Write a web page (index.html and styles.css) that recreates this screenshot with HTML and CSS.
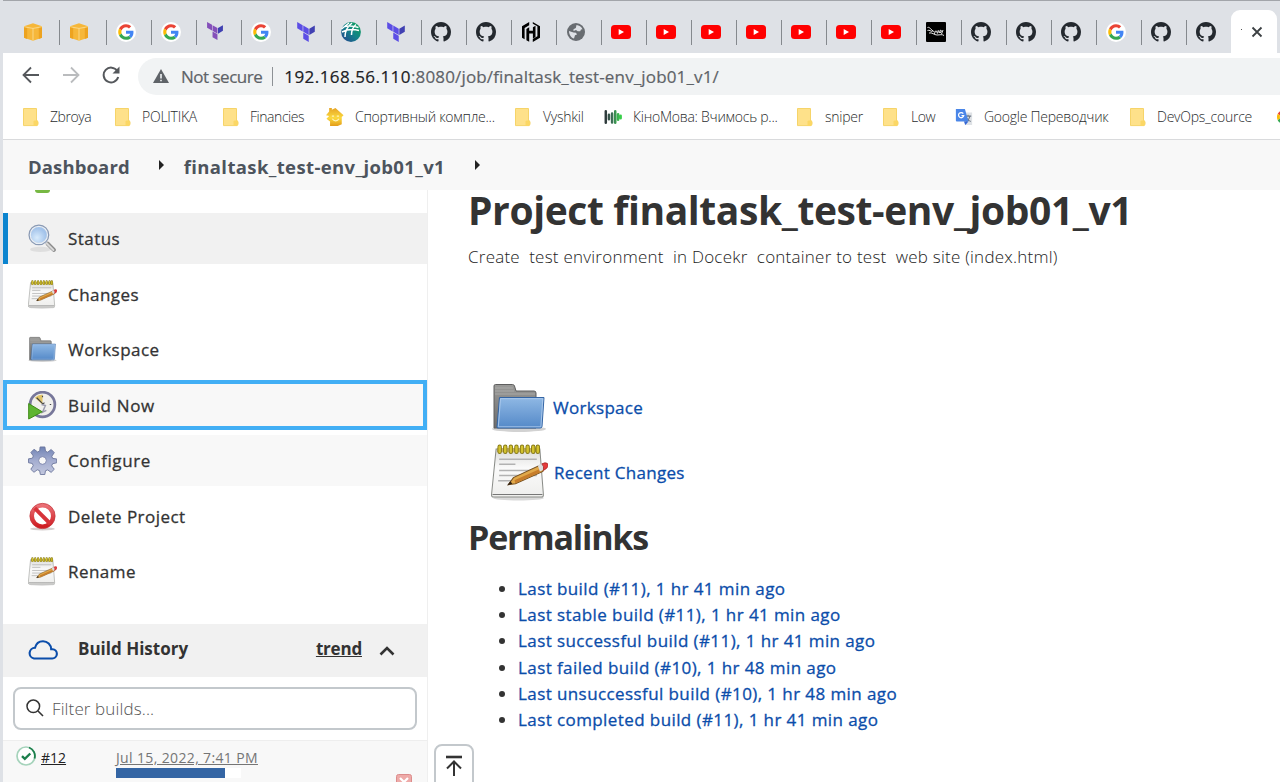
FILE: index.html
```html
<!DOCTYPE html>
<html lang="en">
<head>
<meta charset="utf-8">
<title>finaltask_test-env_job01_v1 [Jenkins]</title>
<link rel="stylesheet" href="styles.css">
</head>
<body>
<svg class="defs" width="0" height="0" aria-hidden="true">
  <defs>
    <linearGradient id="gold" x1="0" y1="0" x2="0" y2="1"><stop offset="0" stop-color="#e6a526"/><stop offset=".55" stop-color="#fbd93f"/><stop offset="1" stop-color="#e39c18"/></linearGradient>
    <linearGradient id="blueFolder" x1="0" y1="0" x2="0" y2="1"><stop offset="0" stop-color="#8fb8e4"/><stop offset="1" stop-color="#5489c8"/></linearGradient>
    <linearGradient id="greyFolder" x1="0" y1="0" x2="0" y2="1"><stop offset="0" stop-color="#9a9a98"/><stop offset="1" stop-color="#6c6c6c"/></linearGradient>
    <linearGradient id="paper" x1="0" y1="0" x2="0" y2="1"><stop offset="0" stop-color="#dcdcda"/><stop offset=".4" stop-color="#fafafa"/><stop offset="1" stop-color="#eeeeec"/></linearGradient>
    <linearGradient id="gear" x1="0" y1="0" x2="0" y2="1"><stop offset="0" stop-color="#7083b4"/><stop offset=".5" stop-color="#a4add0"/><stop offset="1" stop-color="#c3c8de"/></linearGradient>
    <linearGradient id="stop" x1="0" y1="0" x2="0" y2="1"><stop offset="0" stop-color="#ea7076"/><stop offset="1" stop-color="#cf1d22"/></linearGradient>
    <radialGradient id="lens" cx=".4" cy=".65"><stop offset="0" stop-color="#d8ebfc"/><stop offset="1" stop-color="#a3c3ea"/></radialGradient>
    <linearGradient id="earth" x1="0" y1="1" x2="1" y2="0"><stop offset="0" stop-color="#27408f"/><stop offset=".5" stop-color="#12828a"/><stop offset="1" stop-color="#0ca650"/></linearGradient>
    <linearGradient id="wave" x1="0" y1="0" x2="1" y2="0"><stop offset="0" stop-color="#2f3a3c"/><stop offset=".4" stop-color="#3c6b55"/><stop offset="1" stop-color="#38d04a"/></linearGradient>
  </defs>
  <symbol id="aws" viewBox="0 0 20 20"><path fill="#f6b73a" d="M1 4.200 10 1.300l9 2.900v11.600l-9 2.900-9-2.900z"/><path fill="none" stroke="#fbdf9c" stroke-width=".8" d="M1 4.800 10 6.400l9-1.600M10 6.400v12"/><path fill="#eda320" d="m1 5.200 3.200.7v11l-3.200-1.100zM15.800 5.900l3.200-.7v10.600l-3.200 1.100z"/></symbol>
  <symbol id="google" viewBox="0 0 20 20"><circle cx="10" cy="10" r="10" fill="#fff"/><g transform="translate(2.200 2.200) scale(.325)"><path fill="#ea4335" d="M24 9.500c3.540 0 6.710 1.220 9.210 3.600l6.850-6.850C35.900 2.380 30.470 0 24 0 14.620 0 6.510 5.380 2.560 13.220l7.980 6.190C12.430 13.720 17.740 9.500 24 9.500z"/><path fill="#4285f4" d="M46.980 24.550c0-1.570-.15-3.090-.38-4.550H24v9.020h12.940c-.58 2.960-2.260 5.480-4.780 7.180l7.730 6c4.510-4.180 7.090-10.360 7.090-17.650z"/><path fill="#fbbc05" d="M10.530 28.590A14.500 14.500 0 0 1 9.770 24c0-1.600.27-3.140.76-4.590l-7.980-6.190A23.900 23.900 0 0 0 0 24c0 3.880.92 7.540 2.560 10.780z"/><path fill="#34a853" d="M24 48c6.480 0 11.930-2.130 15.890-5.810l-7.730-6c-2.150 1.450-4.920 2.300-8.160 2.300-6.260 0-11.570-4.220-13.470-9.910l-7.980 6.190C6.510 42.620 14.620 48 24 48z"/></g></symbol>
  <symbol id="terraform" viewBox="0 0 24 24"><path d="M1.440 0v7.575l6.561 3.790V3.787zM8.720 4.230v7.575l6.561 3.787V8.018zm0 8.405v7.575L15.280 24v-7.578z"/><path class="tf-side" d="m22.560 4.227-6.561 3.791v7.574l6.560-3.787z"/></symbol>
  <symbol id="planet" viewBox="0 0 20 20"><circle cx="10" cy="10" r="9.900" fill="url(#earth)"/><path fill="none" stroke="#fff" stroke-width="1.500" d="M1 10c5-2.500 11-3 17-1.500M3.500 4.500C9 3.500 13 4 17.500 5.500M4 15C4 9 7 4 11 1M10.500 13C10.500 8 12.500 4.500 15 2.500M.500 7 8 1"/></symbol>
  <symbol id="github" viewBox="0 0 16 16"><path fill="#24292f" d="M8 0C3.580 0 0 3.580 0 8c0 3.540 2.290 6.530 5.470 7.590.4.070.55-.17.55-.38 0-.19-.01-.82-.01-1.490-2.010.37-2.530-.49-2.690-.94-.09-.23-.48-.94-.82-1.130-.28-.15-.68-.52-.01-.53.63-.01 1.080.58 1.230.82.72 1.210 1.870.87 2.330.66.070-.52.280-.87.510-1.070-1.780-.2-3.640-.89-3.640-3.950 0-.87.310-1.590.820-2.150-.08-.2-.36-1.020.080-2.120 0 0 .67-.21 2.200.820.640-.18 1.320-.27 2-.27s1.360.090 2 .270c1.530-1.040 2.200-.820 2.200-.820.440 1.100.160 1.920.080 2.120.510.560.820 1.270.820 2.150 0 3.070-1.870 3.750-3.650 3.950.290.250.540.730.540 1.480 0 1.070-.010 1.930-.010 2.200 0 .210.150.460.550.380A8.010 8.010 0 0 0 16 8c0-4.420-3.580-8-8-8z"/></symbol>
  <symbol id="hashi" viewBox="0 0 20 20"><path d="M8.200 0v3.200L3.600 5.900v11.300L1 15.700V4.200zM5.400 7 8.200 5.300v3.500h3.700V5.200l2.600-1.500v11.200L11.900 16.500v-4.900H8.200v8.200l-2.800-1.600zM11.800 0l7.200 4.200v11.500L11.800 20v-3l4.600-2.800V4.300l-4.600-2.600z"/></symbol>
  <symbol id="globe" viewBox="0 0 20 20"><circle cx="10" cy="10" r="9" fill="#686c71"/><path fill="#dee1e6" d="M10.500 3c2.500.2 5 1.700 6 4.200l-1.500.3-.8 1.800h-2.500L10 8l-2.500 1V7.300L9.800 6zM3 9l4.500 1.500 2.500.2 1 1.800-2 .8-1 3.200C5.500 16 3 13 3 9z"/></symbol>
  <symbol id="youtube" viewBox="0 0 20 20"><rect y="3" width="20" height="14" rx="3.500" fill="#f00"/><path fill="#fff" d="m7.700 7 5.300 3-5.300 3z"/></symbol>
  <symbol id="signature" viewBox="0 0 20 20"><rect width="20" height="20" rx="1" fill="#000"/><path fill="none" stroke="#fff" stroke-width=".9" d="M1.500 5.500c2-1 3 2 7 4.500M1.500 8.500c2-1 3 1 5 1M8 12c2-1 0-3 2-3s0 3 2 2V8.500c1 0 1 2 2 2.500V8.500c2-1 2 2 0 2M17 8l-1.500 4M3 11c3-1 5 2 8 2s5-1 7 .5"/></symbol>
  <symbol id="bfolder" viewBox="0 0 18 20"><path fill="#fee18a" stroke="#f6d469" d="M1.500 1.500h13v12.500l1.500.6v3l-1.500 1h-13z"/><path fill="#fbd765" d="M11.500 19v-4.500l1-1H16v4.500l-1 1z"/></symbol>
  <symbol id="house" viewBox="0 0 20 20"><path fill="url(#gold)" d="M3.500 0h3v2L10.500 0l9 8-2 2v8L13 20H4.500v-5L.5 12l3-3L0 8l3.500-4z"/><path fill="none" stroke="#fff3b8" stroke-width="1.300" d="M6.500 9H9M12 9h2.500M7 12c2 3 5 3 7.500 0"/></symbol>
  <symbol id="equalizer" viewBox="0 0 20 20"><path fill="none" stroke="url(#wave)" stroke-width="2.800" stroke-linecap="round" d="M2 3.500v13M5.500 7.500v5M9 6v10M12.500 3.500v13M15.700 7v6M18.500 8.500v3"/></symbol>
  <symbol id="translate" viewBox="0 0 20 20"><path fill="#dfe2e6" d="M8 5h11v14h-8z"/><path fill="none" stroke="#6e7a88" stroke-width="1.200" d="M11 9h7M14.500 7.500V9M12 15c3-1 4-3.500 4.500-6M12.500 10.500c1 2 2.500 3.500 5 4.500"/><path fill="#4a86e8" d="M1 1h10l4 14H2a1 1 0 0 1-1-1z"/><path fill="#3367d6" d="m10 15 1.500 4 3.500-4z"/><path fill="none" stroke="#fff" stroke-width="1.400" d="M9.200 6.200A2.900 2.900 0 1 0 9.700 8.500H7.200"/></symbol>
  <symbol id="notepad" viewBox="0 0 56 56"><ellipse cx="27" cy="53" rx="25" ry="2.500" fill="#d9d9d9"/><path fill="url(#paper)" stroke="#8b8d89" d="M5 5h43l3.500 45q0 2-2 2h-47q-2 0-2-2z"/><path fill="none" stroke="#777" d="M1.500 49.500h49"/><path stroke="#b2b2b2" stroke-width="1.500" d="M8 15h37M8 20h16M8 26h37M8 31h37M7 36h13"/><path fill="#c9b56a" d="M6 4h42v4H6z"/><path stroke="#857818" stroke-width="4.300" stroke-linecap="round" d="M8.500 2.700v5M14 2.700v5M19.500 2.700v5M25 2.700v5M30.500 2.700v5M36 2.700v5M41.500 2.700v5M46 2.700v5"/><path stroke="#d3c22e" stroke-width="2.500" stroke-linecap="round" d="M8.500 2.700v5M14 2.700v5M19.500 2.700v5M25 2.700v5M30.500 2.700v5M36 2.700v5M41.500 2.700v5M46 2.700v5"/><path fill="#e1a94a" stroke="#76501e" d="m17 40 5-7 26-12q4 1 3 6L24 39z"/><path fill="#c77d2a" d="m24 38.500 25-11-1-3-25 11z"/><path fill="#ddd" d="m46 21 4-1.500q3 2 2 5.500l-4 2z"/><path fill="#e63b3b" stroke="#a22" stroke-width=".8" d="m50 19.500 3-1q3 0 3 2t-1.500 3.500L51.500 26q1-4-1.500-6.500z"/><path fill="#302010" d="m16 40.500 3-4 2 2.500z"/></symbol>
  <symbol id="folder" viewBox="0 0 56 50"><ellipse cx="28" cy="46" rx="27" ry="3" fill="#d2d2d2"/><path fill="url(#greyFolder)" stroke="#5e5e5e" d="M3 45V3q0-1.500 1.500-1.500h17Q23 1.500 23.500 3L25 8h18q2 0 2 2v35z"/><path stroke="#b5b5b3" stroke-width=".7" d="M4 5h18M4 8h19M4 11h40"/><path fill="url(#blueFolder)" stroke="#3465a4" d="M8.500 14.500h44.500L51 43.500q0 1.500-2 1.500H7q-1.500 0-1-1.500z"/><path fill="none" stroke="#aecbec" stroke-width=".9" d="M9.500 15.700h42.300l-1.900 28.100H7.300z"/></symbol>
  <symbol id="magnifier" viewBox="0 0 28 28"><ellipse cx="12" cy="24.500" rx="10" ry="2.500" fill="#dedede"/><path stroke="#8b8b8b" stroke-width="4" stroke-linecap="round" d="m19 19 6 6"/><path stroke="#d8d8d8" stroke-width="2" stroke-linecap="round" d="m18 18.500 6.500 6.500"/><circle cx="10.500" cy="10.500" r="9" fill="url(#lens)" stroke="#8a9ab4" stroke-width="2.200"/><circle cx="10.500" cy="10.500" r="8.300" fill="none" stroke="#e9eff6" stroke-width="1.200"/></symbol>
  <symbol id="clock" viewBox="0 0 30 30"><circle cx="15" cy="14" r="12.800" fill="#f0efec" stroke="#77779a" stroke-width="2.800"/><path fill="#e1c467" d="m15 14-8-7q3-3 8-3.500z"/><path fill="none" stroke="#444" stroke-width="1.200" d="m9 7 6.500 6.500L17 12M15 5v1.500M24 14h-1.500"/><path fill="none" stroke="#9a9aae" stroke-width="1.500" d="M14 14l4 1-3 7 4-2"/><path fill="#5db531" stroke="#3b8813" d="m.7 13 14 8.500-14 7.500z"/></symbol>
  <symbol id="gearicon" viewBox="0 0 30 30"><path fill="url(#gear)" stroke="#69739b" stroke-width=".9" d="m12.500 1 5 0 .6 4.400 2.300 1 3.600-2.800 3.200 3.300-2.600 3.700.9 2.200 4.200.6v4l-4.200.9-1 2.200 2.700 3.600-3.300 3.200-3.500-2.600-2.300.9-.7 3.900h-4.600l-.8-4-2.400-.9-3.400 2.600-3.300-3.100 2.500-3.700-.9-2.300-4-.8v-4l4.100-.7.9-2.300-2.500-3.600 3.200-3.300 3.700 2.700 2.200-.9z"/><circle cx="15" cy="15" r="4" fill="#f8f8f8" stroke="#7c86ad"/></symbol>
  <symbol id="forbidden" viewBox="0 0 28 28"><ellipse cx="14" cy="26" rx="12" ry="1.500" fill="#d5cfcf"/><circle cx="14" cy="13.500" r="10.200" fill="#fff" stroke="url(#stop)" stroke-width="4"/><path stroke="#d7333a" stroke-width="3.800" d="m6.500 6 15 15"/><circle cx="14" cy="13.500" r="12.200" fill="none" stroke="#c3363b" stroke-width=".7"/></symbol>
</svg>

<div class="window">
  <header class="tabs">
    <span class="tab tab-first"><svg><use href="#aws"/></svg></span>
    <span class="tab tab-second"><svg><use href="#aws"/></svg></span>
    <span class="tab"><svg><use href="#google"/></svg></span>
    <span class="tab"><svg><use href="#google"/></svg></span>
    <span class="tab"><svg class="tf-old"><use href="#terraform"/></svg></span>
    <span class="tab"><svg><use href="#google"/></svg></span>
    <span class="tab"><svg class="tf"><use href="#terraform"/></svg></span>
    <span class="tab"><svg><use href="#planet"/></svg></span>
    <span class="tab"><svg class="tf"><use href="#terraform"/></svg></span>
    <span class="tab"><svg><use href="#github"/></svg></span>
    <span class="tab"><svg><use href="#github"/></svg></span>
    <span class="tab"><svg><use href="#hashi"/></svg></span>
    <span class="tab"><svg><use href="#globe"/></svg></span>
    <span class="tab"><svg><use href="#youtube"/></svg></span>
    <span class="tab"><svg><use href="#youtube"/></svg></span>
    <span class="tab"><svg><use href="#youtube"/></svg></span>
    <span class="tab"><svg><use href="#youtube"/></svg></span>
    <span class="tab"><svg><use href="#youtube"/></svg></span>
    <span class="tab"><svg><use href="#youtube"/></svg></span>
    <span class="tab"><svg><use href="#youtube"/></svg></span>
    <span class="tab"><svg><use href="#signature"/></svg></span>
    <span class="tab"><svg><use href="#github"/></svg></span>
    <span class="tab"><svg><use href="#github"/></svg></span>
    <span class="tab"><svg><use href="#github"/></svg></span>
    <span class="tab"><svg><use href="#google"/></svg></span>
    <span class="tab"><svg><use href="#github"/></svg></span>
    <span class="tab tab-last"><svg><use href="#github"/></svg></span>
    <span class="tab-active"><i class="dot"></i><svg viewBox="0 0 12 12"><path d="m1.500 1.500 9 9m0-9-9 9" stroke="#3c4043" stroke-width="1.800"/></svg></span>
  </header>

  <div class="toolbar">
    <svg class="nav" viewBox="0 0 18 18"><path d="M17 9H2M9 1.500 1.500 9 9 16.500" fill="none" stroke="#55585c" stroke-width="1.800"/></svg>
    <svg class="nav" viewBox="0 0 18 18"><path d="M1 9h15M9 1.500 16.500 9 9 16.500" fill="none" stroke="#babcbe" stroke-width="1.800"/></svg>
    <svg class="nav" viewBox="0 0 18 18"><path d="M15.300 5A7.400 7.400 0 1 0 16.200 11" fill="none" stroke="#55585c" stroke-width="2"/><path d="M17.500.5v7h-7z" fill="#55585c"/></svg>
    <div class="omnibox">
      <svg class="warn" viewBox="0 0 16 14"><path fill="#5f6368" d="M8 0 16 14H0z"/><path stroke="#f1f3f4" stroke-width="1.600" d="M8 5v4.500M8 10.800v1.500"/></svg>
      <span class="insecure">Not secure</span>
      <span class="divider"></span>
      <span class="url"><span class="host">192.168.56.110</span><span class="path">:8080/job/finaltask_test-env_job01_v1/</span></span>
    </div>
  </div>

  <nav class="bookmarks">
    <a class="tight"><svg><use href="#bfolder"/></svg><span>Zbroya</span></a>
    <a><svg><use href="#bfolder"/></svg><span>POLITIKA</span></a>
    <a class="tight"><svg><use href="#bfolder"/></svg><span>Financies</span></a>
    <a class="offset"><svg><use href="#house"/></svg><span>Спортивный компле...</span></a>
    <a class="offset"><svg><use href="#bfolder"/></svg><span>Vyshkil</span></a>
    <a class="offset"><svg><use href="#equalizer"/></svg><span>КіноМова: Вчимось р...</span></a>
    <a class="offset"><svg><use href="#bfolder"/></svg><span>sniper</span></a>
    <a class="offset tight"><svg><use href="#bfolder"/></svg><span>Low</span></a>
    <a class="offset"><svg><use href="#translate"/></svg><span>Google Переводчик</span></a>
    <a><svg><use href="#bfolder"/></svg><span>DevOps_cource</span></a>
    <a><svg><use href="#google"/></svg></a>
  </nav>

  <nav class="crumbs">
    <span class="crumb-home">Dashboard</span><i class="arrow"></i><span class="crumb-job">finaltask_test-env_job01_v1</span><i class="arrow arrow-end"></i>
  </nav>

  <div class="page">
    <aside class="side">
      <div class="up"><i></i></div>
      <a class="task selected"><svg><use href="#magnifier"/></svg><span>Status</span></a>
      <a class="task"><svg><use href="#notepad"/></svg><span>Changes</span></a>
      <a class="task"><svg><use href="#folder"/></svg><span>Workspace</span></a>
      <a class="task focused"><svg><use href="#clock"/></svg><span>Build Now</span></a>
      <a class="task shaded"><svg><use href="#gearicon"/></svg><span>Configure</span></a>
      <a class="task"><svg><use href="#forbidden"/></svg><span>Delete Project</span></a>
      <a class="task"><svg><use href="#notepad"/></svg><span>Rename</span></a>

      <div class="history-head">
        <svg class="cloud" viewBox="0 0 30 20"><path d="M6 18.500h18a4.600 4.600 0 0 0 .5-9.200h-1.300C23 4.500 19.500 1.200 15 1.200c-4 0-7 2.500-8 6.600A5.400 5.400 0 0 0 6 18.500z" fill="none" stroke="#0b4daa" stroke-width="2.100"/></svg>
        <span class="history-title">Build History</span>
        <a class="trend">trend</a>
        <svg class="chev" viewBox="0 0 16 10"><path d="m1.500 8.500 6.500-6.500 6.500 6.500" fill="none" stroke="#333" stroke-width="2.600"/></svg>
      </div>
      <div class="filter">
        <svg viewBox="0 0 18 18"><circle cx="7.300" cy="7.300" r="6.300" fill="none" stroke="#333" stroke-width="1.500"/><path d="m12 12 5 5" stroke="#333" stroke-width="1.600"/></svg>
        <span>Filter builds...</span>
      </div>
      <div class="build">
        <svg class="status" viewBox="0 0 20 20"><circle cx="10" cy="10" r="9" fill="#fff" stroke="#a5d3bb" stroke-width="1.700"/><path d="M13 1.500a9 9 0 0 1 5.500 11" fill="none" stroke="#1c7f4c" stroke-width="1.800"/><path d="m6 10.200 2.800 2.600L14.300 7.500" fill="none" stroke="#1c7f4c" stroke-width="2.400"/></svg>
        <span class="num"><a>#12</a></span>
        <div class="when"><a>Jul 15, 2022, 7:41 PM</a><div class="bar"><i></i></div></div>
        <svg class="cancel" viewBox="0 0 16 16"><rect x=".5" y=".5" width="15" height="15" rx="2" fill="#eeaaa8" stroke="#dc8c8c"/><path d="m4 4 8 8m0-8-8 8" stroke="#fff" stroke-width="2.200"/></svg>
      </div>
    </aside>

    <main class="main">
      <h1>Project finaltask_test-env_job01_v1</h1>
      <p class="desc">Create&nbsp; test environment&nbsp; in Docekr&nbsp; container to test&nbsp; web site (index.html)</p>
      <div class="shortcuts">
        <a class="shortcut"><svg class="big-folder"><use href="#folder"/></svg><span>Workspace</span></a>
        <a class="shortcut"><svg class="big-pad"><use href="#notepad"/></svg><span>Recent Changes</span></a>
      </div>
      <h2>Permalinks</h2>
      <ul class="links">
        <li><a>Last build (#11), 1 hr 41 min ago</a></li>
        <li><a>Last stable build (#11), 1 hr 41 min ago</a></li>
        <li><a>Last successful build (#11), 1 hr 41 min ago</a></li>
        <li><a>Last failed build (#10), 1 hr 48 min ago</a></li>
        <li><a>Last unsuccessful build (#10), 1 hr 48 min ago</a></li>
        <li><a>Last completed build (#11), 1 hr 41 min ago</a></li>
      </ul>
    </main>
  </div>
  <a class="to-top"><svg viewBox="0 0 16 22"><path d="M0 2h16" stroke="#333" stroke-width="2.600"/><path d="M8 21V7M1 13.500 8 6.500l7 7" fill="none" stroke="#333" stroke-width="2"/></svg></a>
</div>
</body>
</html>
```
FILE: styles.css
```css
* { box-sizing: border-box; }
body { margin: 0; font-family: "Open Sans", "Noto Sans", sans-serif; color: #333; background: #fff; }
svg { display: block; flex: none; }
.defs { position: absolute; }
.window { height: 782px; overflow: hidden; border-left: 3px solid #dee1e6; display: flex; flex-direction: column; position: relative; }

.tabs { height: 53px; flex: none; display: flex; margin-left: -3px; padding-left: 14px; background: #dee1e6; border-top: 1px solid #a2a5aa; align-items: flex-start; overflow: hidden; }
.tab { width: 45px; height: 25px; margin-top: 19px; flex: none; padding: 2px 0 0 9px; border-right: 1px solid #85898e; }
.tab svg { width: 20px; height: 20px; }
.tab-first { width: 46px; }
.tab-second { width: 47px; }
.tab-last { width: 44px; border: 0; }
.tf { fill: #5c4ee5; }
.tf-side { fill: #4040b2; }
.tab .tf-old { width: 18px; height: 18px; fill: #844fba; }
.tab-active { width: 46px; height: 43px; margin-top: 9px; flex: none; background: #fff; border-radius: 9px 9px 0 0; display: flex; align-items: center; gap: 9px; padding-left: 10px; }
.tab-active svg { width: 12px; height: 12px; }
.dot { width: 1px; height: 1px; background: #555; margin-top: -4px; }

.toolbar { height: 43px; flex: none; display: flex; align-items: center; padding: 3px 0 0 19px; }
.nav { width: 18px; height: 18px; margin: -2px 22px 0 0; }
.omnibox { flex: 1; height: 37px; margin: 1px 0 0 -4px; background: #f1f3f4; border-radius: 19px 0 0 19px; display: flex; align-items: center; padding-left: 15px; font-size: 17px; color: #5f6368; }
.warn { width: 16px; height: 14px; margin: -2px 12px 0 0; }
.insecure { letter-spacing: -.5px; -webkit-text-stroke: .2px; }
.divider { width: 1px; height: 19px; background: #8d9195; margin: 0 11px 0 10px; }
.url { white-space: nowrap; -webkit-text-stroke: .2px; }
.host { color: #202124; letter-spacing: .46px; }
.path { letter-spacing: .15px; }

.bookmarks { height: 43px; flex: none; display: grid; grid-template-columns: 92px 108px 104px 188px 90px 192px 86px 73px 174px 146px 30px; padding: 0 0 2px 19px; align-items: center; font-size: 14px; font-weight: 300; letter-spacing: -.25px; color: #2a2c2e; white-space: nowrap; overflow: hidden; }
.bookmarks a { display: flex; align-items: center; gap: 10px; }
.bookmarks .tight { letter-spacing: -.45px; }
.bookmarks .offset { gap: 11px; }
.bookmarks svg { width: 18px; height: 20px; }

.crumbs { height: 51px; flex: none; background: #f8f8f8; border-top: 1px solid #d9dadc; display: flex; align-items: center; padding: 2px 0 0 25px; font-size: 18.500px; font-weight: 700; color: #4d545d; }
.crumb-home { letter-spacing: .12px; }
.crumb-job { letter-spacing: .37px; }
.arrow { border: 5px solid transparent; border-left-color: #222; border-right: 0; margin: -3px 20px 0 29px; }
.arrow-end { margin-left: 30px; }

.page { flex: 1; min-height: 0; display: flex; }
.side { width: 425px; flex: none; border-right: 1px solid #efefef; overflow: hidden; }
.up { height: 23px; padding-left: 32px; }
.up i { display: block; width: 15px; height: 3px; background: #77b843; border-radius: 0 0 5px 5px; }
.task { height: 51px; margin-bottom: 4.500px; display: flex; align-items: center; gap: 11px; padding-left: 25px; font-size: 17px; letter-spacing: .45px; -webkit-text-stroke: .3px; }
.task svg { width: 29px; height: 29px; }
.selected { background: #f1f1f1; border-left: 5px solid #0b84cf; padding-left: 20px; }
.focused { height: 50px; margin-bottom: 5.500px; background: #f8f8f8; border: 4px solid #42aff5; padding: 1px 0 0 21px; letter-spacing: .65px; }
.shaded { background: #f8f8f8; letter-spacing: .6px; }
.history-head { height: 53px; margin-top: 27px; background: #f1f1f1; display: flex; align-items: center; padding: 0 0 4px 25px; font-size: 17px; font-weight: 700; }
.cloud { width: 30px; height: 20px; margin: 2px 20px 0 0; }
.trend { margin-left: auto; text-decoration: underline; letter-spacing: -.2px; }
.chev { width: 16px; height: 10px; margin: 5px 32px 0 17px; }
.filter { height: 43px; margin: 10px 10px; border: 2px solid #c3c8cc; border-radius: 8px; display: flex; align-items: center; gap: 8px; padding-left: 11px; font-size: 17px; font-weight: 300; letter-spacing: .12px; color: #555; }
.filter svg { width: 18px; height: 18px; margin-top: -2px; }
.build { height: 60px; background: #f8f8f8; border-top: 1px solid #eee; display: flex; align-items: flex-start; padding: 7px 0 0 13px; font-size: 14px; color: #222; }
.status { width: 20px; height: 20px; margin: -2px 5px 0 0; }
.build a { text-decoration: underline; }
.num { width: 75px; }
.when { width: 142px; color: #757575; letter-spacing: .36px; white-space: nowrap; }
.bar { width: 125px; height: 10px; margin-top: 1px; background: #fff; }
.bar i { display: block; width: 109px; height: 10px; background: #3465a4; }
.cancel { width: 16px; height: 16px; margin: 26px 0 0 138px; }

.main { flex: 1; padding-left: 40px; white-space: nowrap; }
h1 { margin: 0; font-size: 39px; line-height: 40px; height: 52px; letter-spacing: -.4px; }
.desc { margin: 0; font-size: 17px; font-weight: 300; letter-spacing: .23px; line-height: 30px; height: 133px; color: #222; }
.shortcuts { height: 142px; padding-left: 23px; }
.shortcut { display: flex; align-items: center; gap: 6px; height: 65px; color: #0b4daa; font-size: 17px; letter-spacing: .3px; -webkit-text-stroke: .3px; }
.big-folder { width: 56px; height: 50px; }
.big-pad { width: 57px; height: 57px; }
h2 { margin: 0; font-size: 34px; line-height: 40px; height: 59px; letter-spacing: -1.200px; }
.links { margin: 0; padding-left: 50px; font-size: 17px; letter-spacing: .41px; line-height: 26.200px; -webkit-text-stroke: .3px; }
.links a { color: #0b4daa; }
.to-top { position: absolute; left: 431px; top: 744px; width: 40px; height: 50px; border: 2px solid #c3c8cc; border-radius: 8px; background: #fff; padding: 9px 0 0 10px; }
.to-top svg { width: 16px; height: 22px; }
```
